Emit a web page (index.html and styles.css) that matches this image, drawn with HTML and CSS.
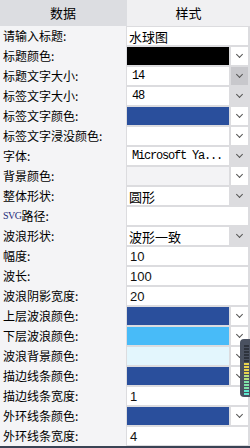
FILE: index.html
```html
<!DOCTYPE html>
<html lang="zh-CN">
<head>
    <meta charset="UTF-8">
    <meta name="viewport" content="width=device-width, initial-scale=1.0">
    <title>水球图设置</title>
    <link rel="stylesheet" href="styles.css">
</head>
<body>
    <div class="panel">
        <div class="head">
            <div class="head-cell head-data">数据</div>
            <div class="head-cell head-style">样式</div>
        </div>

        <div class="row">
            <div class="label">请输入标题:</div>
            <div class="field"><div class="box text cjk">水球图</div></div>
        </div>
        <div class="row">
            <div class="label">标题颜色:</div>
            <div class="field"><div class="swatch" style="background:#000000"></div><div class="arrow"></div></div>
        </div>
        <div class="row">
            <div class="label">标题文字大小:</div>
            <div class="field"><div class="box mono">14</div><div class="arrow gray active"></div></div>
        </div>
        <div class="row">
            <div class="label">标签文字大小:</div>
            <div class="field"><div class="box mono">48</div><div class="arrow gray"></div></div>
        </div>
        <div class="row">
            <div class="label">标签文字颜色:</div>
            <div class="field"><div class="swatch" style="background:#2a4f9c"></div><div class="arrow"></div></div>
        </div>
        <div class="row">
            <div class="label">标签文字浸没颜色:</div>
            <div class="field"><div class="swatch" style="background:#ffffff"></div><div class="arrow"></div></div>
        </div>
        <div class="row">
            <div class="label">字体:</div>
            <div class="field"><div class="box mono">Microsoft Ya...</div><div class="arrow gray"></div></div>
        </div>
        <div class="row">
            <div class="label">背景颜色:</div>
            <div class="field"><div class="swatch" style="background:#f3f3f5"></div><div class="arrow"></div></div>
        </div>
        <div class="row">
            <div class="label">整体形状:</div>
            <div class="field"><div class="box cjk">圆形</div><div class="arrow gray"></div></div>
        </div>
        <div class="row">
            <div class="label"><span class="svg-tag">SVG</span>路径:</div>
            <div class="field"><div class="box text"></div></div>
        </div>
        <div class="row">
            <div class="label">波浪形状:</div>
            <div class="field"><div class="box cjk">波形一致</div><div class="arrow gray"></div></div>
        </div>
        <div class="row">
            <div class="label">幅度:</div>
            <div class="field"><div class="box text num">10</div></div>
        </div>
        <div class="row">
            <div class="label">波长:</div>
            <div class="field"><div class="box text num">100</div></div>
        </div>
        <div class="row">
            <div class="label">波浪阴影宽度:</div>
            <div class="field"><div class="box text num">20</div></div>
        </div>
        <div class="row">
            <div class="label">上层波浪颜色:</div>
            <div class="field"><div class="swatch" style="background:#2a4f9c"></div><div class="arrow"></div></div>
        </div>
        <div class="row">
            <div class="label">下层波浪颜色:</div>
            <div class="field"><div class="swatch" style="background:#48bbf8"></div><div class="arrow"></div></div>
        </div>
        <div class="row">
            <div class="label">波浪背景颜色:</div>
            <div class="field"><div class="swatch" style="background:#e3f6fd"></div><div class="arrow"></div></div>
        </div>
        <div class="row">
            <div class="label">描边线条颜色:</div>
            <div class="field"><div class="swatch" style="background:#2a4f9c"></div><div class="arrow"></div></div>
        </div>
        <div class="row">
            <div class="label">描边线条宽度:</div>
            <div class="field"><div class="box text num">1</div></div>
        </div>
        <div class="row">
            <div class="label">外环线条颜色:</div>
            <div class="field"><div class="swatch" style="background:#2a4f9c"></div><div class="arrow"></div></div>
        </div>
        <div class="row">
            <div class="label">外环线条宽度:</div>
            <div class="field"><div class="box text num">4</div></div>
        </div>

        <div class="meter">
            <div class="bar off"></div><div class="bar off"></div><div class="bar off"></div>
            <div class="bar off"></div><div class="bar off"></div><div class="bar off"></div>
            <div class="bar yellow"></div><div class="bar yellow"></div><div class="bar yellow"></div>
            <div class="bar yellow"></div><div class="bar lime"></div><div class="bar lime"></div>
            <div class="bar green"></div><div class="bar green"></div><div class="bar green"></div>
            <div class="bar teal"></div><div class="bar teal"></div>
        </div>
    </div>
</body>
</html>
```

FILE: styles.css
```css
body {
    margin: 0;
    padding: 0;
    background: #f4f4f6;
    font-family: "Noto Sans CJK SC", "Liberation Sans", sans-serif;
    font-size: 12px;
    color: #000;
}
.panel {
    position: relative;
    width: 250px;
    height: 448px;
    background: #f4f4f6;
    border-bottom: 2px solid #3a4354;
    box-sizing: border-box;
    overflow: hidden;
}
.head {
    display: grid;
    grid-template-columns: 126px 1fr;
    height: 26px;
}
.head-cell {
    display: flex;
    align-items: center;
    justify-content: center;
    font-size: 13px;
    padding-bottom: 1px;
}
.head-data {
    background: #dcdde1;
}
.head-style {
    background: #f0f0f2;
    border-left: 1px solid #dcdde1;
}
.row {
    display: grid;
    grid-template-columns: 126px 1fr;
    height: 20px;
}
.label {
    display: flex;
    align-items: center;
    padding-left: 3px;
    white-space: nowrap;
    line-height: 1;
}
.svg-tag {
    font-family: "Liberation Serif", serif;
    font-size: 10px;
    color: #1d2a7a;
    letter-spacing: -0.5px;
}
.field {
    display: flex;
    gap: 2px;
    padding: 1px 2px 1px 1px;
    background: #dcdcdf;
}
.box {
    flex: 1;
    height: 18px;
    background: #fff;
    display: flex;
    align-items: center;
    padding-left: 3px;
    box-sizing: border-box;
    white-space: nowrap;
    overflow: hidden;
}
.text {
    flex: 1;
}
.cjk {
    font-size: 13px;
    padding-left: 2px;
}
.mono {
    font-family: "Liberation Mono", monospace;
    font-size: 12px;
    letter-spacing: -1.2px;
    padding-left: 5px;
}
.num {
    font-family: "Liberation Sans", sans-serif;
    font-size: 13px;
    padding-left: 3px;
    color: #111;
}
.swatch {
    flex: 1;
    height: 18px;
}
.arrow {
    width: 17px;
    height: 18px;
    background: #fff;
    position: relative;
}
.arrow::after {
    content: "";
    position: absolute;
    left: 6px;
    top: 5px;
    width: 4px;
    height: 4px;
    border-right: 1px solid #555;
    border-bottom: 1px solid #555;
    transform: rotate(45deg);
}
.arrow.gray {
    background: #dcdcdf;
}
.arrow.active {
    background: #c8c8cc;
}
.meter {
    position: absolute;
    left: 240px;
    top: 339px;
    width: 14px;
    height: 58px;
    background: #4a5160;
    border-radius: 4px;
    box-sizing: border-box;
    padding: 6px 0 0 4px;
    display: flex;
    flex-direction: column;
    gap: 1px;
}
.bar {
    width: 5px;
    height: 2px;
}
.bar.off {
    background: #2e333d;
}
.bar.yellow {
    background: #e8d24c;
}
.bar.lime {
    background: #b7e07a;
}
.bar.green {
    background: #7fe4a8;
}
.bar.teal {
    background: #5ee8d0;
}
```
